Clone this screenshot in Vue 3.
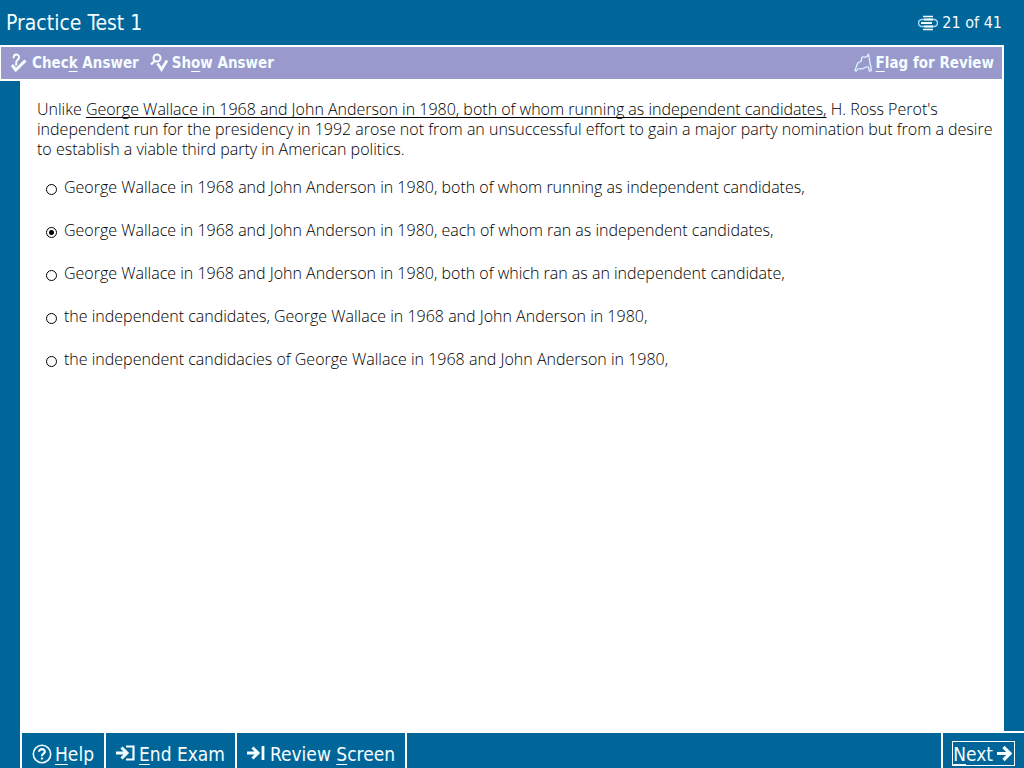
<script setup>
import { ref } from 'vue'

const selected = ref(1)
const flagged = ref(false)
const answers = [
  'George Wallace in 1968 and John Anderson in 1980, both of whom running as independent candidates,',
  'George Wallace in 1968 and John Anderson in 1980, each of whom ran as independent candidates,',
  'George Wallace in 1968 and John Anderson in 1980, both of which ran as an independent candidate,',
  'the independent candidates, George Wallace in 1968 and John Anderson in 1980,',
  'the independent candidacies of George Wallace in 1968 and John Anderson in 1980,'
]
</script>

<template>
  <div class="exam">
    <header class="title-bar">
      <h1>Practice Test 1</h1>
      <div class="progress">
        <svg width="20" height="16" viewBox="0 0 20 16" fill="none" stroke="currentColor">
          <path d="M5 1.5h10M5 14.5h10" stroke-width="1.4" />
          <path d="M4 4.5h12a3.5 3.5 0 0 1 0 7H4a3.5 3.5 0 0 1 0-7z" stroke="#a9dcfb" stroke-width="1.5" />
          <path d="M3 8h11M6 4.5h9M6 11.5h9" stroke-width="1.8" />
        </svg>
        <span>21 of 41</span>
      </div>
    </header>

    <nav class="tool-bar">
      <button type="button">
        <svg width="18" height="20" viewBox="0 0 18 20" fill="none" stroke="currentColor">
          <path d="M2.5 5.2C2.5 .4 8.4 .6 8 4.6 7.8 6.8 5.2 6.8 5.2 9.4v3" stroke-width="2" />
          <path d="M1 12 4.8 17 14.5 7.5" stroke-width="3" />
        </svg>
        <span>Chec<u>k</u> Answer</span>
      </button>
      <button type="button">
        <svg width="19" height="20" viewBox="0 0 19 20" fill="none" stroke="currentColor">
          <circle cx="7" cy="5" r="3.5" stroke-width="2" />
          <path d="M4.8 7.8 1 11.5" stroke-width="2.4" />
          <path d="M7.5 10.5 11.5 16.5 17 7.5" stroke-width="2.8" />
        </svg>
        <span>Sh<u>o</u>w Answer</span>
      </button>
      <button type="button" class="flag" :aria-pressed="flagged" @click="flagged = !flagged">
        <svg width="19" height="20" viewBox="0 0 19 20" fill="none" stroke="#d8f0ff" stroke-width="1.4" stroke-linejoin="round">
          <path d="M1 17.5 3.5 10.5C5 8.5 7.5 9.5 7.5 6.5 7.5 3.5 9 3.5 11 4.2 13 4.5 13.5 3 14.5 1.2L16 10 17.5 17.5 15.5 18 14.3 14.2C11.5 12.5 10 16.5 7 15.8 5 15.3 3.5 15.5 2.3 18z" />
        </svg>
        <span><u>F</u>lag for Review</span>
      </button>
    </nav>

    <main class="sheet">
      <p class="question">
        Unlike <u>George Wallace in 1968 and John Anderson in 1980, both of whom running as independent candidates,</u>
        H. Ross Perot's independent run for the presidency in 1992 arose not from an unsuccessful effort to gain a major
        party nomination but from a desire to establish a viable third party in American politics.
      </p>
      <div class="answers" role="radiogroup">
        <label v-for="(answer, i) in answers" :key="i">
          <input v-model="selected" type="radio" name="answer" :value="i" />
          <span>{{ answer }}</span>
        </label>
      </div>
    </main>

    <footer class="bottom-bar">
      <button type="button">
        <svg width="20" height="20" viewBox="0 0 20 20" fill="none" stroke="currentColor">
          <circle cx="10" cy="10" r="8.7" stroke-width="1.6" />
          <path d="M7 7.8C7 4.2 13 4.4 12.8 7.8 12.6 9.8 10 9.6 10 12.2M10 13.6v2" stroke-width="2.2" />
        </svg>
        <span><u>H</u>elp</span>
      </button>
      <button type="button">
        <svg width="20" height="20" viewBox="0 0 20 20" fill="none" stroke="currentColor">
          <path d="M0 9h11M5.5 3.5 11 9 5.5 14.5" stroke-width="3" />
          <path d="M10 2.5h7.5v13H10" stroke-width="2.2" />
        </svg>
        <span><u>E</u>nd Exam</span>
      </button>
      <button type="button">
        <svg width="20" height="20" viewBox="0 0 20 20" fill="none" stroke="currentColor">
          <path d="M0 9h11M5.5 3.5 11 9 5.5 14.5" stroke-width="3" />
          <path d="M16 2v14" stroke-width="2.8" />
        </svg>
        <span>Review <u>S</u>creen</span>
      </button>
      <div class="next">
        <button type="button">
          <span><u>N</u>ext</span>
          <svg width="18" height="18" viewBox="0 0 18 18" fill="none" stroke="currentColor">
            <path d="M1 8.5h13M7.5 2 14 8.5 7.5 15" stroke-width="3.2" />
          </svg>
        </button>
      </div>
    </footer>
  </div>
</template>

<style>
body {
  background: #006699;
}
</style>

<style scoped>
.exam {
  display: flex;
  flex-direction: column;
  min-height: 100vh;
  background: #006699;
  color: #f4fdff;
  font-family: "DejaVu Sans Condensed", "DejaVu Sans", sans-serif;
}

.title-bar {
  display: flex;
  align-items: center;
  justify-content: space-between;
  height: 45px;
  padding: 0 22px 0 6px;
}

h1 {
  margin: 0;
  font-size: 21px;
  font-weight: 400;
}

.progress {
  display: flex;
  align-items: center;
  gap: 4px;
  font-size: 16px;
}

button {
  display: flex;
  align-items: center;
  padding: 0;
  border: 0;
  background: none;
  color: inherit;
  font: inherit;
  white-space: nowrap;
  cursor: pointer;
}

svg {
  flex: none;
}

u {
  text-decoration-thickness: 1px;
  text-underline-offset: 3px;
  text-decoration-skip-ink: none;
}

.tool-bar {
  display: flex;
  align-items: center;
  gap: 11px;
  height: 32px;
  margin-right: 20px;
  padding: 0 8px 0 10px;
  border: 2px solid #fff;
  border-left-width: 1px;
  background: #9999cc;
  font-size: 15px;
  font-weight: 700;
}

.tool-bar button {
  gap: 3px;
}

.tool-bar .flag {
  margin-left: auto;
}

.sheet {
  flex: 1;
  margin: 0 20px;
  padding: 18px 5px 18px 17px;
  background: #fff;
  color: #000;
  font-family: "Open Sans", "Noto Sans", sans-serif;
  font-size: 16px;
  font-weight: 300;
  line-height: 20px;
}

.question {
  margin: 0;
}

.sheet u {
  text-underline-offset: 2px;
}

.answers {
  display: flex;
  flex-direction: column;
  gap: 23px;
  margin-top: 18px;
  padding-left: 9px;
}

label {
  display: flex;
  align-items: center;
  gap: 7px;
}

input {
  flex: none;
  appearance: none;
  width: 11px;
  height: 11px;
  margin: 4px 0 0;
  border: 1px solid #000;
  border-radius: 50%;
}

input:checked {
  background: radial-gradient(circle, #000 2px, #fff 3px);
}

.bottom-bar {
  position: relative;
  display: flex;
  height: 35px;
  padding-left: 20px;
  font-size: 19px;
}

.bottom-bar::after {
  content: "";
  position: absolute;
  right: 0;
  bottom: 100%;
  width: 20px;
  height: 2px;
  background: #fff;
}

.bottom-bar > button {
  gap: 3px;
  padding: 6px 10px 0;
  border-right: 2px solid #fff;
}

.bottom-bar > button:first-child {
  border-left: 2px solid #fff;
}

.next {
  display: flex;
  align-items: flex-end;
  margin-left: auto;
  padding: 0 9px 2px;
  border-left: 2px solid #fff;
}

.next button {
  gap: 3px;
  height: 25px;
  border: 1px solid #fff;
}
</style>
